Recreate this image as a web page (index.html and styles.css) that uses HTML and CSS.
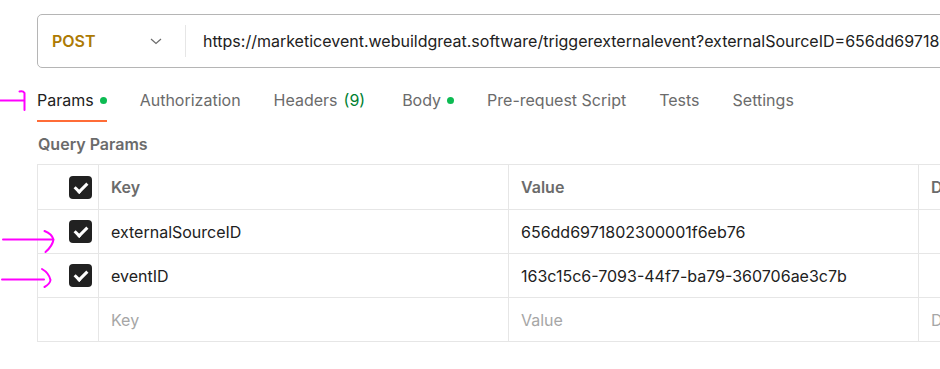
FILE: index.html
```html
<!DOCTYPE html>
<html lang="en">
    <head>
        <meta charset="UTF-8" />
        <meta name="viewport" content="width=device-width, initial-scale=1.0" />
        <title>Query Params</title>
        <link rel="stylesheet" href="styles.css">
    </head>
    <body>
        <svg class="marks" width="60" height="300" viewBox="0 0 60 300" fill="none" stroke="#ff00ff" stroke-width="2" stroke-linecap="round" stroke-linejoin="round">
            <path d="M0 100.5 H24" />
            <path d="M19.5 91.5 Q23 90.5 24.5 93 V110" />
            <path d="M3 239.5 H53" />
            <path d="M44.5 231 Q52 234 53.5 239.5 Q52.5 246 45.5 252" />
            <path d="M2 279.5 H44" />
            <path d="M42 269 Q49 273 50.5 280 Q50 284 44.5 287" />
        </svg>

        <main class="request">
            <div class="url-bar">
                <div class="method">
                    <span>POST</span>
                    <svg class="chevron" width="12" height="7" viewBox="0 0 12 7" fill="none" stroke="#6b6b6b" stroke-width="1.2"><path d="M1 1 L6 5.5 L11 1" /></svg>
                </div>
                <div class="url">https://marketicevent.webuildgreat.software/triggerexternalevent?externalSourceID=656dd6971802300001f6eb76&amp;eventID=163c15c6-7093-44f7-ba79-360706ae3c7b</div>
            </div>

            <nav class="tabs">
                <a class="tab active">Params <span class="dot"></span></a>
                <a class="tab">Authorization</a>
                <a class="tab headers">Headers <span class="count">(9)</span></a>
                <a class="tab">Body <span class="dot"></span></a>
                <a class="tab">Pre-request Script</a>
                <a class="tab">Tests</a>
                <a class="tab">Settings</a>
            </nav>

            <h3 class="section-title">Query Params</h3>

            <table class="params">
                <colgroup>
                    <col class="col-check" />
                    <col class="col-key" />
                    <col class="col-value" />
                    <col />
                </colgroup>
                <thead>
                    <tr>
                        <th class="check"><span class="box"></span></th>
                        <th>Key</th>
                        <th>Value</th>
                        <th>Description</th>
                    </tr>
                </thead>
                <tbody>
                    <tr>
                        <td class="check"><span class="box"></span></td>
                        <td>externalSourceID</td>
                        <td>656dd6971802300001f6eb76</td>
                        <td></td>
                    </tr>
                    <tr>
                        <td class="check"><span class="box"></span></td>
                        <td>eventID</td>
                        <td>163c15c6-7093-44f7-ba79-360706ae3c7b</td>
                        <td></td>
                    </tr>
                    <tr class="empty">
                        <td class="check"></td>
                        <td>Key</td>
                        <td>Value</td>
                        <td>Description</td>
                    </tr>
                </tbody>
            </table>
        </main>
    </body>
</html>
```

FILE: styles.css
```css
* {
    box-sizing: border-box;
}

html,
body {
    margin: 0;
    padding: 0;
    background: #fff;
    overflow: hidden;
}

body {
    font-family: Inter, "Noto Sans", sans-serif;
    font-size: 16px;
    color: #212121;
    position: relative;
    height: 369px;
}

.marks {
    position: absolute;
    left: 0;
    top: 0;
    z-index: 2;
}

.request {
    width: 1200px;
    padding: 14px 0 0 37px;
}

/* url bar */
.url-bar {
    display: flex;
    align-items: center;
    height: 54px;
    border: 1px solid #b5b5b5;
    border-radius: 5px;
}

.method {
    display: flex;
    flex-shrink: 0;
    align-items: center;
    justify-content: space-between;
    width: 148px;
    height: 32px;
    padding: 0 23px 0 14px;
    border-right: 1px solid #e6e6e6;
    color: #ad7a03;
    font-weight: 600;
}

.url {
    padding-left: 17px;
    white-space: nowrap;
    overflow: hidden;
}

/* tabs */
.tabs {
    display: flex;
    gap: 33px;
    margin-top: 12px;
}

.tab {
    display: flex;
    align-items: center;
    gap: 6px;
    padding: 8px 0;
    line-height: 24px;
    border-bottom: 2px solid transparent;
    color: #6b6b6b;
}

.tab.active {
    color: #212121;
    border-bottom-color: #ff6c37;
}

.tab.headers {
    margin-right: 4px;
}

.tab .count {
    color: #007f31;
}

.dot {
    width: 7px;
    height: 7px;
    border-radius: 50%;
    background: #0cbb52;
}

.section-title {
    margin: 12px 0 10px 1px;
    font-size: 16px;
    line-height: 20px;
    font-weight: 600;
    color: #6b6b6b;
}

/* params table */
.params {
    border-collapse: collapse;
    table-layout: fixed;
    width: 1100px;
}

.col-check {
    width: 61px;
}

.col-key,
.col-value {
    width: 410px;
}

.params th,
.params td {
    height: 44px;
    padding: 0 12px;
    border: 1px solid #e6e6e6;
    text-align: left;
    white-space: nowrap;
    overflow: hidden;
}

.params th {
    height: 45px;
    font-weight: 600;
    color: #6b6b6b;
}

.params .check {
    padding: 0 6px 0 0;
    text-align: right;
}

.box {
    display: inline-block;
    vertical-align: middle;
    width: 23px;
    height: 23px;
    border-radius: 4px;
    background: #212121;
    position: relative;
}

.box::after {
    content: "";
    position: absolute;
    left: 8px;
    top: 4px;
    width: 5px;
    height: 10px;
    border: solid #fff;
    border-width: 0 3px 3px 0;
    transform: rotate(45deg);
}

.empty td {
    color: #a6a6a6;
}
```
